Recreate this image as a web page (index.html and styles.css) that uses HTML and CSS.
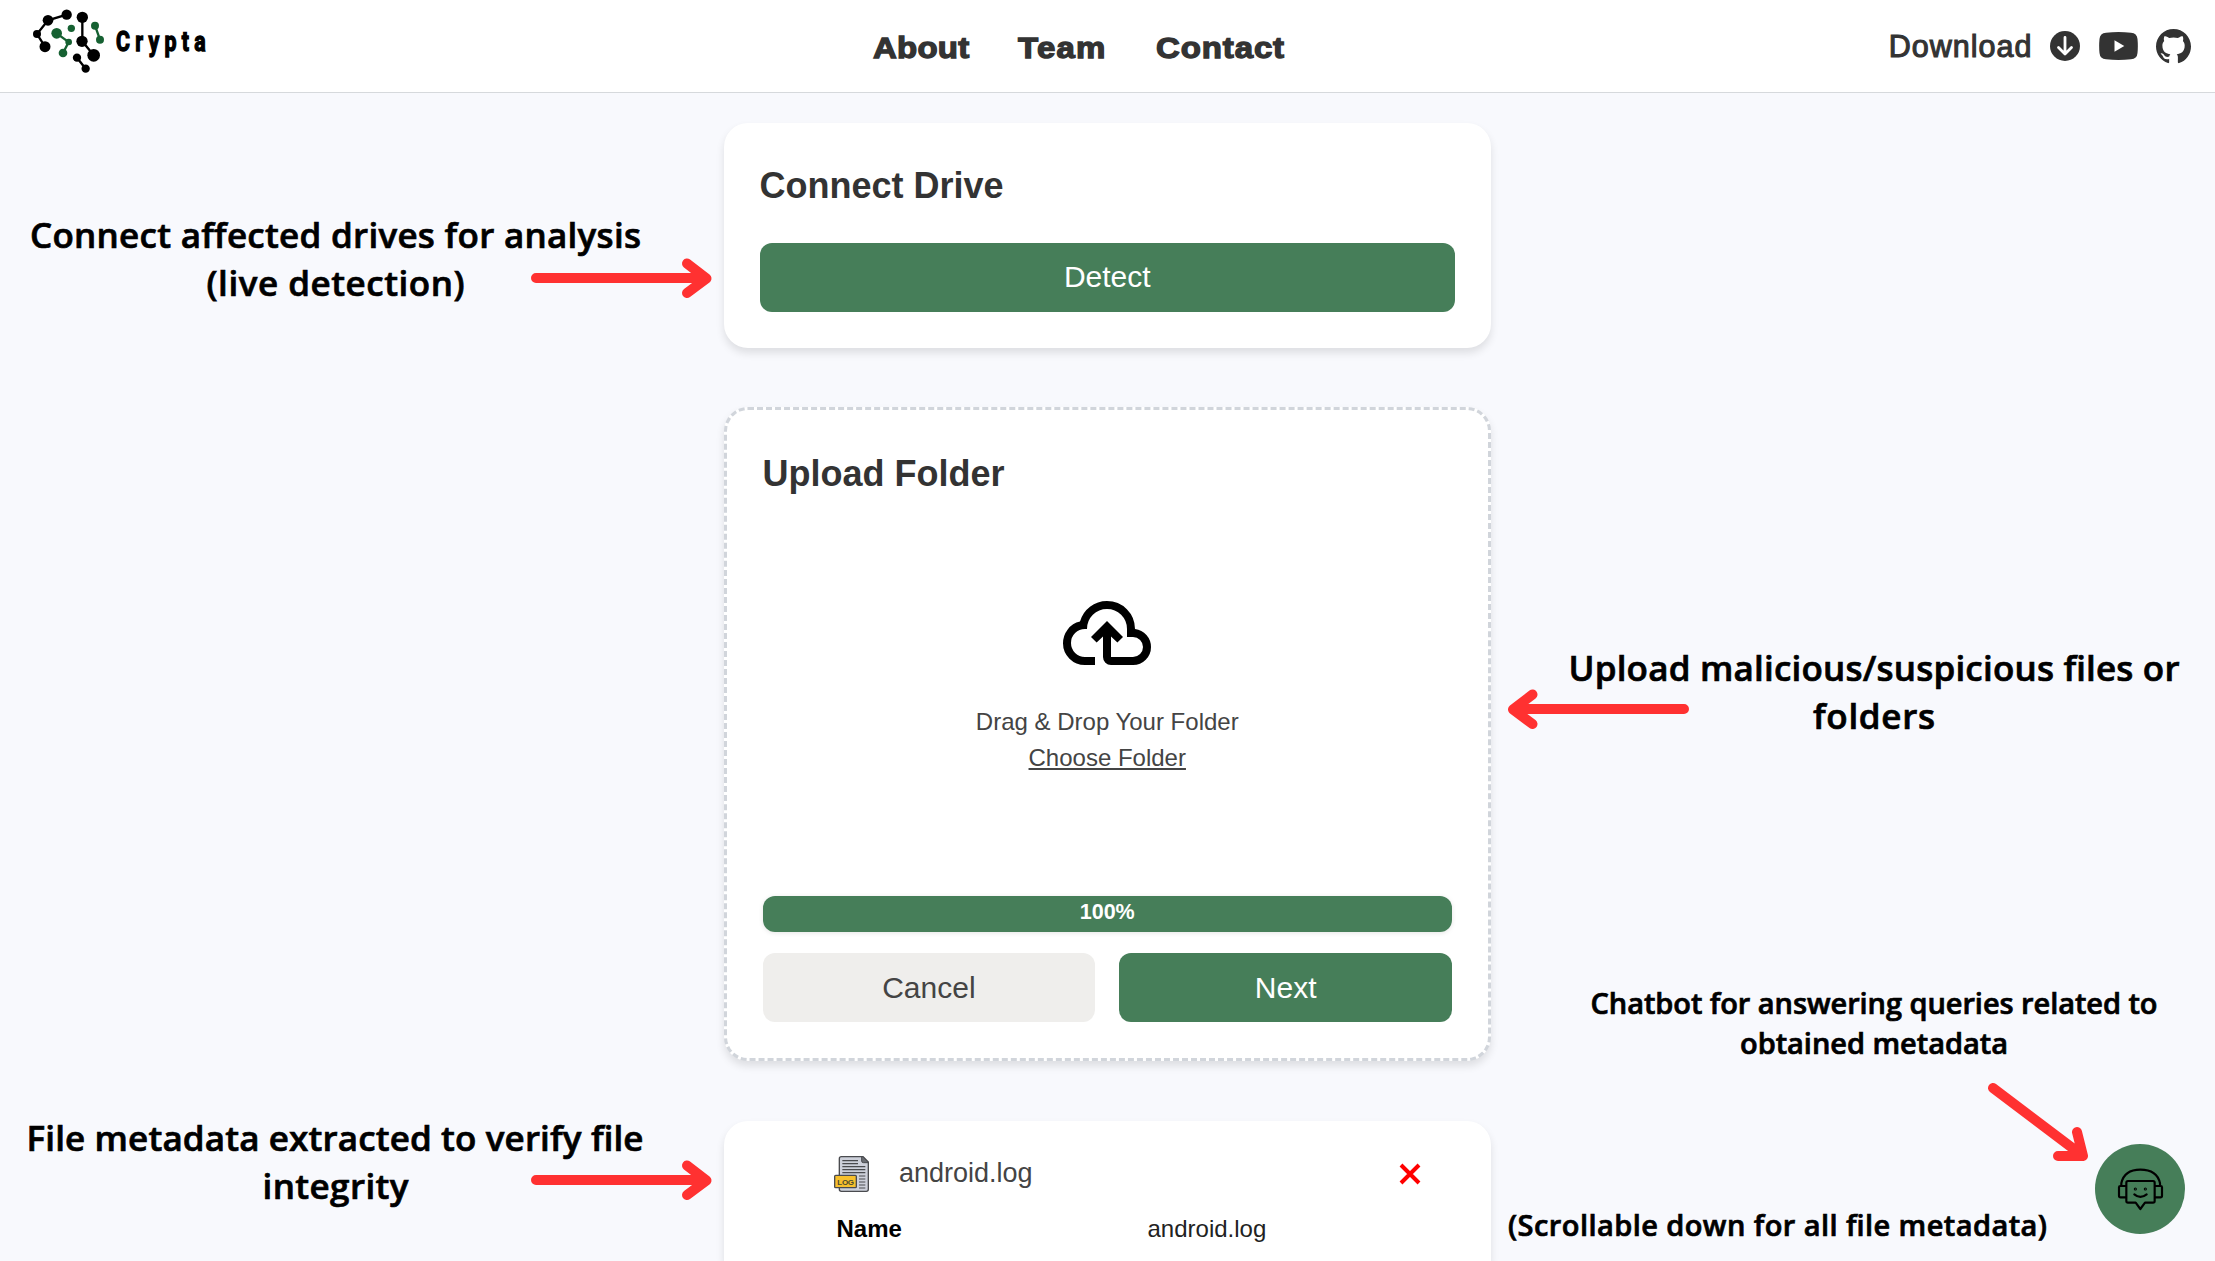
FILE: index.html
```html
<!DOCTYPE html>
<html lang="en">
<head>
<meta charset="utf-8">
<title>Crypta</title>
<link rel="stylesheet" href="styles.css">
</head>
<body>
<header class="header">
  <svg class="logo" width="220" height="92" viewBox="0 0 660 276" role="img" aria-label="Crypta">
    <g stroke-width="7" fill="none">
      <path d="M200 44L144 61L111 102L135 140M247 52V124L281 166M231 173L257 206" stroke="#000"/>
      <path d="M170 100L206 126L189 159M285 77L300 119" stroke="#166132"/>
    </g>
    <g fill="#000">
      <circle cx="200" cy="44" r="15.5"/><circle cx="144" cy="61" r="16"/><circle cx="111" cy="102" r="12"/>
      <circle cx="135" cy="140" r="16.5"/><circle cx="247" cy="52" r="17"/><circle cx="246" cy="124" r="17"/>
      <circle cx="281" cy="166" r="19"/><circle cx="231" cy="173" r="12.5"/><circle cx="257" cy="206" r="12.5"/>
    </g>
    <g fill="#166132">
      <circle cx="170" cy="100" r="16"/><circle cx="206" cy="126" r="10"/><circle cx="189" cy="159" r="13"/>
      <circle cx="214" cy="85" r="11"/><circle cx="285" cy="77" r="12"/><circle cx="300" cy="119" r="12"/>
    </g>
    <text class="brand" transform="translate(348 153) scale(.78 1)" textLength="345">Crypta</text>
  </svg>
  <nav class="nav">
    <a class="about">About</a><a class="team">Team</a><a class="contact">Contact</a>
  </nav>
  <div class="links">
    <span class="download">Download</span>
    <svg class="i-down" width="30" height="30" viewBox="0 0 30 30"><circle cx="15" cy="15" r="15" fill="#333"/><path d="M15 6.500V23M8.500 16.500L15 23L21.500 16.500" fill="none" stroke="#fff" stroke-width="2.800" stroke-linecap="round" stroke-linejoin="round"/></svg>
    <svg class="i-tube" width="39" height="28" viewBox="0 0 39 28"><path d="M7 .7Q19.500-.5 32 .7Q38 1 38.500 7Q39.200 14 38.500 21Q38 27 32 27.300Q19.500 28.500 7 27.300Q1 27 .5 21Q-.2 14 .5 7Q1 1 7 .7Z" fill="#333"/><path d="M15.500 8.300V19.700L25.300 14Z" fill="#fff"/></svg>
    <svg class="i-hub" width="35" height="35" viewBox="0 0 16 16"><path fill="#333" d="M8 0C3.580 0 0 3.580 0 8c0 3.540 2.290 6.530 5.470 7.590.4.070.55-.17.55-.38 0-.19-.01-.82-.01-1.490-2.010.37-2.530-.49-2.690-.94-.09-.23-.48-.94-.82-1.130-.28-.15-.68-.52-.01-.53.63-.01 1.080.58 1.230.82.72 1.210 1.870.87 2.330.66.07-.52.28-.87.51-1.070-1.780-.2-3.640-.89-3.640-3.950 0-.87.31-1.590.82-2.150-.08-.2-.36-1.020.08-2.120 0 0 .67-.21 2.200.82.64-.18 1.320-.27 2-.27s1.360.09 2 .27c1.530-1.040 2.200-.82 2.200-.82.44 1.100.16 1.920.08 2.120.51.56.82 1.270.82 2.150 0 3.070-1.870 3.750-3.650 3.950.29.25.54.73.54 1.480 0 1.070-.01 1.930-.01 2.200 0 .21.15.46.55.38A8.010 8.010 0 0 0 16 8c0-4.420-3.580-8-8-8Z"/></svg>
  </div>
</header>

<main class="main">
  <section class="card connect">
    <h2>Connect Drive</h2>
    <button class="btn primary">Detect</button>
  </section>

  <section class="card upload">
    <h2>Upload Folder</h2>
    <div class="drop">
      <svg width="96" height="96" viewBox="0 -960 960 960"><path d="M260-160q-91 0-155.500-63T40-377q0-78 47-139t123-78q25-92 100-149t170-57q117 0 198.500 81.500T760-520q69 8 114.500 59.500T920-340q0 75-52.500 127.500T740-160H520q-33 0-56.500-23.500T440-240v-206l-64 62-56-56 160-160 160 160-56 56-64-62v206h220q42 0 71-29t29-71q0-42-29-71t-71-29h-60v-80q0-83-58.500-141.500T480-720q-83 0-141.500 58.500T280-520h-20q-58 0-99 41t-41 99q0 58 41 99t99 41h100v80H260Z"/></svg>
      <p>Drag &amp; Drop Your Folder</p>
      <p><a class="choose">Choose Folder</a></p>
    </div>
    <div class="progress"><div class="bar" style="width:100%">100%</div></div>
    <div class="actions">
      <button class="btn plain">Cancel</button>
      <button class="btn primary">Next</button>
    </div>
  </section>

  <section class="card meta">
    <div class="file">
      <svg width="36" height="38" viewBox="0 0 108 114">
        <path d="M22 5H87L103 21V103Q103 109 97 109H22Q16 109 16 103V11Q16 5 22 5Z" fill="#cdd0da" stroke="#4a4b4f" stroke-width="4"/>
        <path d="M83 5V18Q83 23 88 23H103L87 5Z" fill="#6a6c72" stroke="#4a4b4f" stroke-width="3"/>
        <path d="M25 17H72M25 26H72M25 35H94M25 44H94M25 53H94M75 63H94M75 72H94M75 81H94M75 90H94M75 99H94" stroke="#4a4b4f" stroke-width="3.500"/>
        <rect x="2" y="61" width="65" height="37" rx="3" fill="#f7c02c" stroke="#4a4b4f" stroke-width="4"/>
        <text x="10" y="89" class="logtag" textLength="50">LOG</text>
      </svg>
      <span class="fname">android.log</span>
      <svg class="close" width="22" height="22" viewBox="0 0 22 22"><path d="M2 2L20 20M20 2L2 20" stroke="#f00" stroke-width="4"/></svg>
    </div>
    <div class="row"><b>Name</b><span>android.log</span></div>
  </section>
</main>

<button class="chat" aria-label="Chatbot">
  <svg width="90" height="90" viewBox="45 42 270 270" fill="none" stroke="#000" stroke-width="6.500" stroke-linejoin="round" stroke-linecap="round">
    <path d="M124 168V160C130 132 150 119 181 119S234 132 240 160V168"/>
    <path d="M137 168H121Q117 168 117 172V197Q117 202 122 202H137M226 168H242Q246 168 246 172V197Q246 202 241 202H226"/>
    <path d="M144 153H219Q224 153 224 158V213Q224 218 219 218H195L181 237L167 218H144Q139 218 139 213V158Q139 153 144 153Z"/>
    <path d="M163 193Q181 208 200 193"/>
    <circle cx="166" cy="177" r="1.500"/><circle cx="196" cy="177" r="1.500"/>
  </svg>
</button>

<svg class="notes" width="2215" height="1261" viewBox="0 0 2215 1261">
  <g class="arrow">
    <path d="M536 278H706M687 263.500L706.500 278.500L687 293"/>
    <path d="M536 1180H706M687 1165.500L706.500 1180.500L687 1195"/>
    <path d="M1684 709H1514M1532.500 694.500L1513 709.500L1532.500 724"/>
    <path d="M1993 1088L2083 1156M2077 1132L2083 1156H2058"/>
  </g>
  <g class="big">
    <text x="30" y="247.500" textLength="611">Connect affected drives for analysis</text>
    <text x="206.500" y="295.500" textLength="258">(live detection)</text>
    <text x="26.500" y="1150.500" textLength="617">File metadata extracted to verify file</text>
    <text x="262.500" y="1199" textLength="146">integrity</text>
    <text x="1568.500" y="681" textLength="611">Upload malicious/suspicious files or</text>
    <text x="1813" y="729" textLength="122">folders</text>
  </g>
  <g class="small">
    <text x="1590.500" y="1013.500" textLength="567">Chatbot for answering queries related to</text>
    <text x="1740" y="1053.500" textLength="268">obtained metadata</text>
    <text x="1508" y="1235.500" textLength="539">(Scrollable down for all file metadata)</text>
  </g>
</svg>
</body>
</html>
```

FILE: styles.css
```css
* { box-sizing: border-box; }
body {
  margin: 0;
  height: 1261px;
  overflow: hidden;
  background: #f8f9fd;
  color: #333;
  font-family: "Liberation Sans", Arial, sans-serif;
  position: relative;
}
h2, p { margin: 0; }

.header {
  height: 93px;
  display: flex;
  background: #fff;
  border-bottom: 1px solid #d6d9dc;
}
.brand {
  font: 700 82px Roboto, sans-serif;
  fill: #000;
  stroke: #000;
  stroke-width: 4px;
}
.nav {
  display: flex;
  margin-left: 653px;
  padding-top: 30px;
  font-size: 30px;
  font-weight: 700;
  line-height: 35px;
  -webkit-text-stroke: 1.3px #333;
}
.nav a { transform: scaleX(1.1); transform-origin: 0 50%; }
.about { width: 145px; letter-spacing: .2px; }
.team { width: 138px; letter-spacing: 1.1px; }
.contact { width: 130px; letter-spacing: .8px; }
.links {
  display: flex;
  align-items: center;
  margin-left: auto;
  padding-right: 24px;
}
.download {
  font-size: 30.5px;
  letter-spacing: 1px;
  -webkit-text-stroke: 1.1px #333;
  margin-right: 17.5px;
}
.i-down { margin-right: 19px; }
.i-tube { margin-right: 18px; }

.main {
  width: 767.5px;
  margin: 30px 0 0 723.5px;
  display: flex;
  flex-direction: column;
}
.card {
  background: #fff;
  border-radius: 24px;
  padding: 36px;
  box-shadow: 0 5px 9px rgba(0, 0, 0, .11);
}
.card h2 {
  font-size: 36px;
  line-height: 53px;
  font-weight: 700;
}
.btn {
  border: 0;
  border-radius: 12px;
  height: 69px;
  padding: 0;
  font: 30px "Liberation Sans", Arial, sans-serif;
}
.primary { background: #467e59; color: #fff; }
.plain { background: #efeeec; color: #444; }
.connect { height: 225px; }
.connect .btn { display: block; width: 100%; margin-top: 30.5px; }

.upload {
  margin-top: 59px;
  height: 654px;
  border: 3px dashed #d1d5db;
}
.upload h2 { line-height: 55px; }
.drop {
  display: flex;
  flex-direction: column;
  align-items: center;
  height: 395px;
  padding-top: 83.5px;
  font-size: 24px;
  line-height: 36px;
  color: #444;
}
.drop svg { margin-bottom: 23.5px; }
.choose { text-decoration: underline; }
.progress { height: 36px; box-shadow: 0 1px 5px rgba(0, 0, 0, .1); border-radius: 12px; }
.bar {
  height: 36px;
  border-radius: 12px;
  background: #467e59;
  color: #fff;
  font-size: 21.5px;
  font-weight: 700;
  line-height: 32px;
  text-align: center;
}
.actions {
  display: grid;
  grid-template-columns: 1fr 1fr;
  gap: 24px;
  margin-top: 21px;
}

.meta {
  margin-top: 60px;
  height: 140px;
  border-radius: 24px 24px 0 0;
  padding: 34px 70px 0 110.5px;
}
.file { display: flex; align-items: center; height: 37px; }
.fname { font-size: 27px; color: #444; margin-left: 29px; }
.close { margin-left: auto; }
.row {
  display: grid;
  grid-template-columns: 311px 1fr;
  margin: 23px 0 0 2.5px;
  font-size: 24px;
  line-height: 28px;
  color: #222;
}
.row b { color: #000; }
.logtag { font: 700 24px "Liberation Sans", Arial, sans-serif; fill: #4a4b2f; }

.chat {
  position: absolute;
  left: 2095px;
  top: 1144px;
  width: 90px;
  height: 90px;
  padding: 0;
  border: 0;
  border-radius: 50%;
  background: #467e59;
}
.chat svg { display: block; }
.notes {
  position: absolute;
  left: 0;
  top: 0;
  pointer-events: none;
}
.arrow { fill: none; stroke: #ff3131; stroke-width: 10; stroke-linecap: round; stroke-linejoin: round; }
.big, .small {
  font-family: "Open Sans", "Noto Sans", sans-serif;
  font-weight: 600;
  fill: #000;
  stroke: #000;
  stroke-width: .7px;
}
.big { font-size: 35px; }
.small { font-size: 29px; }
```
